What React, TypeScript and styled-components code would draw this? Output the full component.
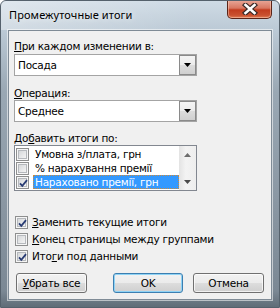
import React from 'react';
import styled, { createGlobalStyle } from 'styled-components';

const GlobalStyle = createGlobalStyle`
  html, body {
    margin: 0;
    padding: 0;
    background: #ffffff;
  }
`;

const Window = styled.div`
  width: 280px;
  height: 308px;
  box-sizing: border-box;
  display: flex;
  flex-direction: column;
  border: 1px solid #55616c;
  border-radius: 6px 6px 0 0;
  background: linear-gradient(
    to bottom,
    #cfdbe5 0,
    #bccad6 28px,
    #9aa8b4 90px,
    #8a97a3 200px,
    #7b8894 290px,
    #5d6974 308px
  );
  overflow: hidden;
  font-family: 'DejaVu Sans', Tahoma, sans-serif;
`;

const TitleBar = styled.div`
  height: 29px;
  display: flex;
  align-items: flex-start;
  justify-content: space-between;
  background: linear-gradient(to right, rgba(255, 255, 255, 0.35), rgba(255, 255, 255, 0) 70%);
`;

const Title = styled.div`
  font-family: 'Noto Sans', 'Open Sans', sans-serif;
  font-size: 11px;
  letter-spacing: 0.1px;
  color: #000;
  padding: 6px 0 0 8px;
  text-shadow: 0 0 6px rgba(255, 255, 255, 0.9);
`;

const CloseButton = styled.div`
  width: 45px;
  height: 19px;
  margin: -1px 7px 0 0;
  box-sizing: border-box;
  border: 1px solid #5a2418;
  border-top: none;
  border-radius: 0 0 5px 5px;
  display: flex;
  align-items: center;
  justify-content: center;
  background: linear-gradient(to bottom, #e9a99a 0%, #d87761 45%, #c23c1e 55%, #c9512f 85%, #e07c55 100%);
  box-shadow: inset 0 0 0 1px rgba(255, 220, 200, 0.45);
`;

const Client = styled.div`
  flex: 1;
  margin: 0 7px;
  border: 1px solid #7f8b96;
  box-shadow: 0 0 0 1px rgba(255, 255, 255, 0.55);
  background: #f0f0f0;
  padding: 9px 0 0 5px;
  display: flex;
  flex-direction: column;
  font-size: 10.5px;
  letter-spacing: -0.25px;
  color: #000;
`;

const BottomFrame = styled.div`
  height: 7px;
`;

const Label = styled.div<{ $top?: number }>`
  height: 13px;
  line-height: 13px;
  margin-top: ${({ $top }) => $top ?? 0}px;
  white-space: nowrap;
`;

const Key = styled.span`
  text-decoration: underline;
  text-underline-offset: 1px;
`;

const Combo = styled.div<{ $top?: number }>`
  width: 183px;
  height: 22px;
  box-sizing: border-box;
  margin-top: ${({ $top }) => $top ?? 0}px;
  border: 1px solid #a4a4a4;
  background: #fff;
  display: flex;
  align-items: stretch;
`;

const ComboText = styled.div`
  flex: 1;
  padding-left: 3px;
  line-height: 20px;
`;

const DropButton = styled.div`
  width: 17px;
  box-sizing: border-box;
  border: 1px solid #8a8a8a;
  margin: 0;
  background: linear-gradient(to bottom, #f4f4f4 0%, #ebebeb 50%, #dcdcdc 51%, #cfcfcf 100%);
  display: flex;
  align-items: center;
  justify-content: center;
`;

const ListBox = styled.div`
  width: 183px;
  height: 46px;
  box-sizing: border-box;
  border: 1px solid #828790;
  background: #fff;
  display: flex;
`;

const ListItems = styled.div`
  flex: 1;
  padding-top: 1px;
  overflow: hidden;
`;

const ListRow = styled.div`
  height: 14px;
  display: flex;
  align-items: center;
  padding-left: 1px;
`;

const ItemText = styled.span<{ $selected?: boolean }>`
  flex: 1;
  margin-left: 4px;
  height: 14px;
  line-height: 13px;
  box-sizing: border-box;
  padding-left: 1px;
  white-space: nowrap;
  overflow: hidden;
  color: ${({ $selected }) => ($selected ? '#fff' : '#000')};
  background: ${({ $selected }) => ($selected ? '#3399ff' : 'transparent')};
  border: 1px dotted ${({ $selected }) => ($selected ? '#cc8a3c' : 'transparent')};
`;

const ScrollBar = styled.div`
  width: 17px;
  display: flex;
  flex-direction: column;
  justify-content: space-between;
  align-items: center;
  padding: 7px 0 6px;
  box-sizing: border-box;
  background: linear-gradient(to right, #e3e3e3, #f3f3f3 40%, #eeeeee);
`;

const BoxOuter = styled.span`
  width: 13px;
  height: 13px;
  box-sizing: border-box;
  border: 1px solid #8e8f8f;
  background: #f6f6f6;
  padding: 1px;
  position: relative;
  flex: none;
`;

const BoxInner = styled.span`
  display: block;
  width: 9px;
  height: 9px;
  box-sizing: border-box;
  border: 1px solid #b6b9bd;
  background: linear-gradient(135deg, #d6d8da, #f4f4f4);
`;

const CheckMark = styled.svg`
  position: absolute;
  left: 0;
  top: 0;
`;

const Options = styled.div`
  margin-top: 23px;
  display: flex;
  flex-direction: column;
`;

const OptionRow = styled.div`
  height: 17px;
  display: flex;
  align-items: flex-start;
  padding: 2px 0 0 1px;
  box-sizing: border-box;
  white-space: nowrap;
`;

const OptionText = styled.span`
  margin-left: 4px;
  line-height: 13px;
`;

const Buttons = styled.div`
  margin: 8px 0 0 2px;
  display: flex;
`;

const Button = styled.div<{ $default?: boolean; $gap?: number }>`
  width: ${({ $default }) => ($default ? 70 : 71)}px;
  height: 20px;
  box-sizing: border-box;
  margin-left: ${({ $gap }) => $gap ?? 0}px;
  border: 1px solid ${({ $default }) => ($default ? '#3c7fb1' : '#707070')};
  border-radius: 3px;
  background: linear-gradient(to bottom, #f2f2f2 0%, #ebebeb 50%, #dddddd 51%, #cfcfcf 100%);
  box-shadow: inset 0 0 0 1px ${({ $default }) => ($default ? '#8fd3f5' : 'rgba(255,255,255,0.7)')};
  display: flex;
  align-items: center;
  justify-content: center;
  line-height: 13px;
`;

const Check = () => (
  <CheckMark width="13" height="13" viewBox="0 0 13 13">
    <path d="M3 6.3 L5.3 8.8 L10 3.2" fill="none" stroke="#2a3d74" strokeWidth="1.8" />
  </CheckMark>
);

const CheckBox = ({ checked }: { checked?: boolean }) => (
  <BoxOuter>
    <BoxInner />
    {checked && <Check />}
  </BoxOuter>
);

const Arrow = ({ up, color }: { up?: boolean; color: string }) => (
  <svg width="7" height="4" viewBox="0 0 7 4">
    <path d={up ? 'M0 4 L3.5 0 L7 4 Z' : 'M0 0 L7 0 L3.5 4 Z'} fill={color} />
  </svg>
);

const listItems = [
  { text: 'Умовна з/плата, грн', checked: false },
  { text: '% нарахування премії', checked: false },
  { text: 'Нараховано премії, грн', checked: true, selected: true },
];

export default function App() {
  return (
    <>
      <GlobalStyle />
      <Window>
        <TitleBar>
          <Title>Промежуточные итоги</Title>
          <CloseButton>
            <svg width="16" height="12" viewBox="0 0 16 12">
              <path d="M3.5 2 L12.5 10 M12.5 2 L3.5 10" stroke="#3a2a28" strokeWidth="5" strokeLinecap="square" />
              <path d="M3.5 2 L12.5 10 M12.5 2 L3.5 10" stroke="#ffffff" strokeWidth="2.6" strokeLinecap="square" />
            </svg>
          </CloseButton>
        </TitleBar>
        <Client>
          <Label>
            <Key>П</Key>ри каждом изменении в:
          </Label>
          <Combo $top={1}>
            <ComboText>Посада</ComboText>
            <DropButton>
              <Arrow color="#000" />
            </DropButton>
          </Combo>
          <Label $top={11}>
            <Key>О</Key>перация:
          </Label>
          <Combo>
            <ComboText>Среднее</ComboText>
            <DropButton>
              <Arrow color="#000" />
            </DropButton>
          </Combo>
          <Label $top={10}>
            До<Key>б</Key>авить итоги по:
          </Label>
          <ListBox>
            <ListItems>
              {listItems.map((item) => (
                <ListRow key={item.text}>
                  <CheckBox checked={item.checked} />
                  <ItemText $selected={item.selected}>{item.text}</ItemText>
                </ListRow>
              ))}
            </ListItems>
            <ScrollBar>
              <Arrow up color="#6d6d6d" />
              <Arrow color="#4a4a4a" />
            </ScrollBar>
          </ListBox>
          <Options>
            <OptionRow>
              <CheckBox checked />
              <OptionText>
                <Key>З</Key>аменить текущие итоги
              </OptionText>
            </OptionRow>
            <OptionRow>
              <CheckBox />
              <OptionText>
                <Key>К</Key>онец страницы между группами
              </OptionText>
            </OptionRow>
            <OptionRow>
              <CheckBox checked />
              <OptionText>
                Ито<Key>г</Key>и под данными
              </OptionText>
            </OptionRow>
          </Options>
          <Buttons>
            <Button>
              <span>
                <Key>У</Key>брать все
              </span>
            </Button>
            <Button $default $gap={26}>
              OK
            </Button>
            <Button $gap={10}>Отмена</Button>
          </Buttons>
        </Client>
        <BottomFrame />
      </Window>
    </>
  );
}
